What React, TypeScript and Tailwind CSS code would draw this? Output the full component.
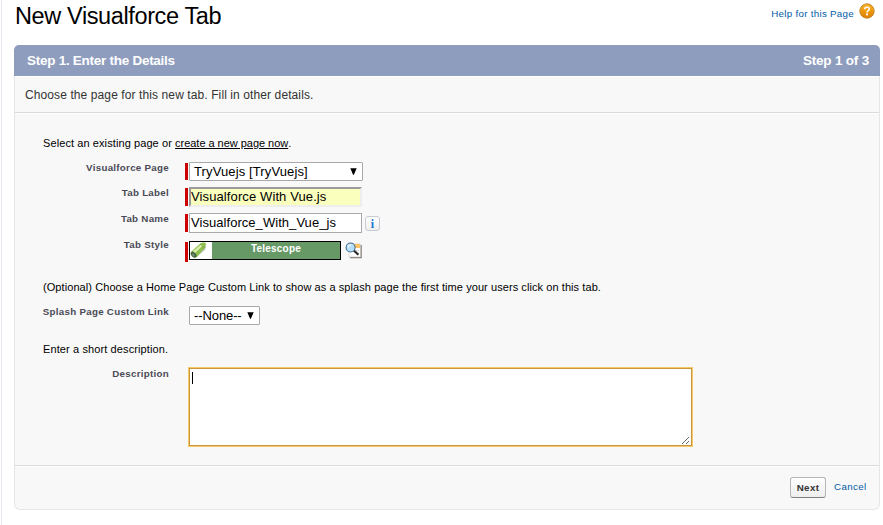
import type { ReactNode } from "react";

function Row({ label, height, labelTop = "pt-0", required, barTop = "mt-px", barHeight = "h-[17px]", children }: {
  label: string; height: string; labelTop?: string; required?: boolean; barTop?: string; barHeight?: string; children: ReactNode;
}) {
  return (
    <div className={`flex items-start ${height}`}>
      <div className={`w-[154px] shrink-0 whitespace-nowrap text-right text-[9.75px] font-bold leading-3 tracking-[0.28px] text-[#4a4a56] ${labelTop}`}>{label}</div>
      <div className={`ml-4 mr-px w-[3px] shrink-0 ${barTop} ${barHeight} ${required ? "bg-[#cc0000]" : ""}`} />
      {children}
    </div>
  );
}

function HelpIcon() {
  return (
    <svg width="16" height="16" viewBox="0 0 16 16">
      <defs>
        <linearGradient id="help" x1="0" y1="0" x2="0" y2="1">
          <stop offset="0" stopColor="#f9b52c" />
          <stop offset=".5" stopColor="#ee9a10" />
          <stop offset="1" stopColor="#dc7c00" />
        </linearGradient>
      </defs>
      <circle cx="8" cy="8" r="7.2" fill="url(#help)" stroke="#b97818" strokeWidth=".8" />
      <path d="M5.7 6.2C5.7 3.6 10.3 3.5 10.3 6 10.3 7.5 8 7.7 8 9.4" fill="none" stroke="#fff" strokeWidth="1.6" />
      <rect x="7" y="10.5" width="2" height="1.8" fill="#fff" />
    </svg>
  );
}

function TelescopeIcon() {
  return (
    <svg width="22" height="17" viewBox="0 0 22 17" className="shrink-0 bg-white">
      <path d="M5 16.4 15 8 16.3 4 8 12Z" fill="#c4c6c4" />
      <path d="M.8 10 10.3 1.4Q12.5 -.1 15.2 .6 16.6 2.8 15 5.7L6.3 15.4Z" fill="#8fc04e" />
      <path d="M2.6 9.6 11 2.4 13.2 3.2 4.9 11.2Z" fill="#d7edaa" />
      <path d="M10 1.9 14.7 6" stroke="#68963a" strokeWidth=".8" />
      <ellipse cx="3.6" cy="12.7" rx="2.3" ry="3.5" transform="rotate(-43 3.6 12.7)" fill="#46663c" />
      <ellipse cx="3.3" cy="13" rx="1" ry="1.8" transform="rotate(-43 3.3 13)" fill="#6e8a78" />
    </svg>
  );
}

function LookupIcon() {
  return (
    <svg width="17" height="17" viewBox="0 0 17 17" className="ml-[4px] mt-[3px] shrink-0">
      <path d="M5 15.6H16V3" fill="none" stroke="#77736f" strokeWidth="1.4" />
      <rect x="4" y="2" width="11.3" height="13" fill="#fff" stroke="#c9c2b8" strokeWidth=".6" />
      <rect x="8.5" y="2" width="6.5" height="4" fill="#ffc466" />
      <path d="M11 8.5H14M13 11H14" stroke="#ddd" />
      <path d="m8.6 8.2 4.8 4.6" stroke="#292421" strokeWidth="2.2" />
      <circle cx="5.6" cy="5.5" r="4.5" fill="#b6e0fa" stroke="#426c8d" strokeWidth="1.1" />
      <path d="M3.2 5.4a2.6 2.6 0 0 1 2.8-2.4" fill="none" stroke="#fff" strokeWidth="1.2" />
    </svg>
  );
}

function Arrow() {
  return <svg width="7" height="7" viewBox="0 0 7 7" className="mb-px"><path d="M.3 .2H6.7L3.9 6.8H3.1Z" fill="#000" /></svg>;
}

export default function App() {
  return (
    <div className="h-[525px] w-[883px] overflow-hidden bg-white font-['Liberation_Sans',Arial,sans-serif] text-black">
      <div className="ml-px h-full border-l border-[#e2e7ef] pl-3">
        <header className="flex h-[45px] items-start justify-between pl-px">
          <h1 className="mt-[2px] whitespace-nowrap text-[23.5px] leading-7 tracking-[-0.38px]">New Visualforce Tab</h1>
          <div className="mr-[8px] mt-[3px] flex items-start whitespace-nowrap text-[9.75px] text-[#015ba7]">
            <span className="mt-[5px] leading-3 tracking-[0.29px]">Help for this Page</span>
            <span className="ml-[5px]"><HelpIcon /></span>
          </div>
        </header>
        <main className="w-[866px]">
          <div className="flex h-[31px] items-center justify-between rounded-t-[5px] bg-[#8e9dbe] pl-[13px] pr-[11px] pt-[2px] text-[13.5px] font-bold text-white">
            <h2 className="tracking-[-0.27px]">Step 1. Enter the Details</h2>
            <span className="tracking-[-0.2px]">Step 1 of 3</span>
          </div>
          <div className="h-[434px] rounded-b-[6px] border border-t-0 border-[#e6e6e6] bg-[#f8f8f8]">
            <p className="h-[37px] border-b border-[#dadada] pl-[10px] pt-[11px] text-[12px] leading-[16px] tracking-[0.1px] text-[#333] shadow-[inset_0_1px_#fff]">Choose the page for this new tab. Fill in other details.</p>
            <section className="h-[353px] border-b border-[#dadada] pt-6 shadow-[inset_0_1px_#fff]">
              <p className="h-[25px] whitespace-nowrap pl-7 text-[11px] leading-[13px] tracking-[0.09px]">Select an existing page or <span className="tracking-[-0.03px] underline underline-offset-1">create a new page now</span>.</p>
              <Row label="Visualforce Page" height="h-[25px]" required>
                <div className="flex h-[19px] w-[174px] items-center justify-between rounded-[1px] border border-[#a9a9a9] bg-white pl-1 pr-[5px] text-[13px] tracking-[0.12px]">
                  <span>TryVuejs [TryVuejs]</span><Arrow />
                </div>
              </Row>
              <Row label="Tab Label" height="h-[26px]" required barHeight="h-[18px]">
                <div className="h-5 w-[173px] border-2 border-[#eee] border-l-[#9b9b9b] border-t-[#9b9b9b] bg-[#faffbd] text-[13px] leading-[15px] tracking-[0.11px]">Visualforce With Vue.js</div>
              </Row>
              <Row label="Tab Name" height="h-[26px]" required barHeight="h-[18px]">
                <div className="h-5 w-[173px] border border-[#a9a9a9] bg-white pl-px text-[13px] leading-[18px] tracking-[0.05px]">Visualforce_With_Vue_js</div>
                <div className="ml-[3px] mt-[3px] flex h-[15px] w-[15px] items-center justify-center rounded-[3px] border border-[#c8ccd2] bg-gradient-to-b from-white to-[#eee] font-['Liberation_Serif',serif] text-[12px] font-bold text-[#1677d2]">i</div>
              </Row>
              <Row label="Tab Style" height="h-[42px]" required barTop="mt-[3px]" barHeight="h-5">
                <div className="mt-[2px] flex h-[19px] w-[152px] border border-black bg-[#669966] text-[10px] font-bold text-white">
                  <TelescopeIcon /><span className="flex-1 text-center leading-[14px] tracking-[0.2px]">Telescope</span>
                </div>
                <LookupIcon />
              </Row>
              <p className="h-[25px] whitespace-nowrap pl-7 text-[11px] leading-[13px] tracking-[0.075px]">(Optional) Choose a Home Page Custom Link to show as a splash page the first time your users click on this tab.</p>
              <Row label="Splash Page Custom Link" height="h-[37px]">
                <div className="flex h-[19px] w-[71px] items-center justify-between rounded-[1px] border border-[#a9a9a9] bg-white pl-1 pr-[5px] text-[13px] tracking-[-0.1px]"><span>--None--</span><Arrow /></div>
              </Row>
              <p className="h-[24px] whitespace-nowrap pl-7 text-[11px] leading-[13px] tracking-[0.11px]">Enter a short description.</p>
              <Row label="Description" height="h-[79px]" labelTop="pt-px">
                <div className="mt-px flex h-[78px] w-[503px] items-start justify-between border border-[#cd963a] bg-white shadow-[0_0_0_1px_#f3c969]">
                  <span className="ml-[2px] mt-[3px] h-3 w-px bg-black" />
                  <svg width="9" height="9" viewBox="0 0 9 9" className="mr-px self-end"><path d="m1 8 7-7M5 8l3-3" stroke="#555" strokeWidth=".9" fill="none" /></svg>
                </div>
              </Row>
            </section>
            <footer className="flex h-[43px] items-center justify-end pr-3 shadow-[inset_0_1px_#fff]">
              <button className="h-[21px] w-9 rounded-[3px] border border-[#b5b5b5] border-b-[#7f7f7f] bg-gradient-to-b from-white to-[#eee] text-[9.75px] font-bold leading-[17px] tracking-[0.4px] text-[#333]">Next</button>
              <a className="ml-2 w-[33px] whitespace-nowrap text-[9.75px] tracking-[0.35px] text-[#015ba7]">Cancel</a>
            </footer>
          </div>
        </main>
      </div>
    </div>
  );
}
